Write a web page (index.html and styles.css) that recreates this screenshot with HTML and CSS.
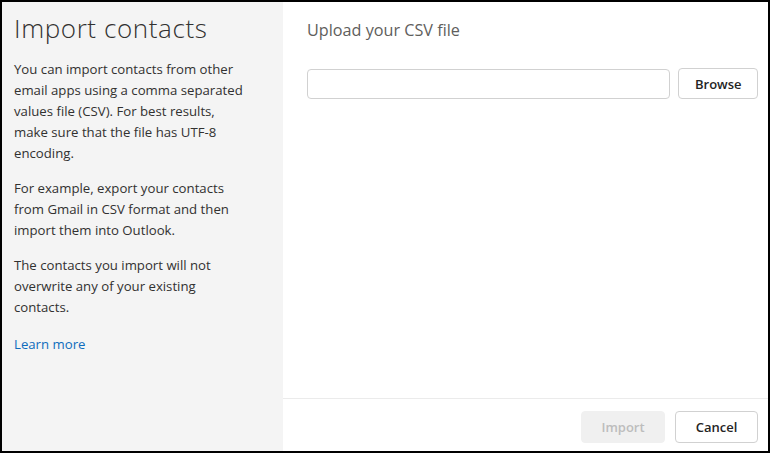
FILE: index.html
```html
<!DOCTYPE html>
<html lang="en">
<head>
<meta charset="utf-8">
<title>Import contacts</title>
<link rel="stylesheet" href="styles.css">
</head>
<body>
<div class="dialog">
  <aside class="side">
    <h1 class="side-title">Import contacts</h1>
    <p class="side-text">You can import contacts from other email apps using a comma separated values file (CSV). For best results, make sure that the file has UTF-8 encoding.</p>
    <p class="side-text">For example, export your contacts from Gmail in CSV format and then import them into Outlook.</p>
    <p class="side-text">The contacts you import will not overwrite any of your existing contacts.</p>
    <a class="side-link" href="#">Learn more</a>
  </aside>
  <main class="main">
    <div class="content">
      <h2 class="upload-title">Upload your CSV file</h2>
      <div class="file-row">
        <input class="file-input" type="text" aria-label="File">
        <button class="btn btn-browse" type="button">Browse</button>
      </div>
    </div>
    <div class="footer">
      <button class="btn btn-import" type="button" disabled>Import</button>
      <button class="btn btn-cancel" type="button">Cancel</button>
    </div>
  </main>
</div>
</body>
</html>
```
FILE: styles.css
```css
* { box-sizing: border-box; }
html, body { margin: 0; padding: 0; background: #fff; }
body {
  font-family: "Open Sans", "Noto Sans", "Liberation Sans", sans-serif;
  color: #323130;
}
.dialog {
  width: 770px;
  height: 453px;
  border: 2px solid #000;
  display: flex;
  background: #fff;
}
.side {
  width: 281px;
  flex: none;
  background: #f4f4f4;
  padding: 8px 35px 0 12px;
}
.side-title {
  margin: 0 0 13px 0;
  font-size: 26px;
  font-weight: 300;
  letter-spacing: 0.6px;
  line-height: 36px;
  color: #323130;
}
.side-text {
  margin: 0 0 14px 0;
  font-size: 13.2px;
  line-height: 21px;
  color: #323130;
}
.side-link {
  display: inline-block;
  font-size: 13.2px;
  line-height: 21px;
  color: #0f6cbd;
  text-decoration: none;
}
.main {
  flex: 1;
  display: flex;
  flex-direction: column;
}
.content {
  flex: 1;
  padding: 15px 10px 0 24px;
}
.upload-title {
  margin: 0 0 25px 0;
  font-size: 16.2px;
  font-weight: 400;
  line-height: 26px;
  color: #605e5c;
}
.file-row {
  display: flex;
  align-items: center;
  gap: 8px;
}
.file-input {
  width: 363px;
  height: 30px;
  border: 1px solid #d1d1d1;
  border-radius: 4px;
  padding: 0 8px;
  font: inherit;
}
.btn {
  height: 32px;
  border-radius: 4px;
  font-family: inherit;
  font-size: 13px;
  font-weight: 600;
  padding: 0 16px;
  background: #fff;
  border: 1px solid #d1d1d1;
  color: #242424;
}
.btn-browse { width: 80px; height: 31px; }
.footer {
  border-top: 1px solid #ebebeb;
  padding: 12px 10px 8px 0;
  display: flex;
  justify-content: flex-end;
  gap: 10px;
}
.btn-import {
  width: 84px;
  background: #f0f0f0;
  border-color: #f0f0f0;
  color: #bdbdbd;
}
.btn-cancel { width: 83px; }
```
